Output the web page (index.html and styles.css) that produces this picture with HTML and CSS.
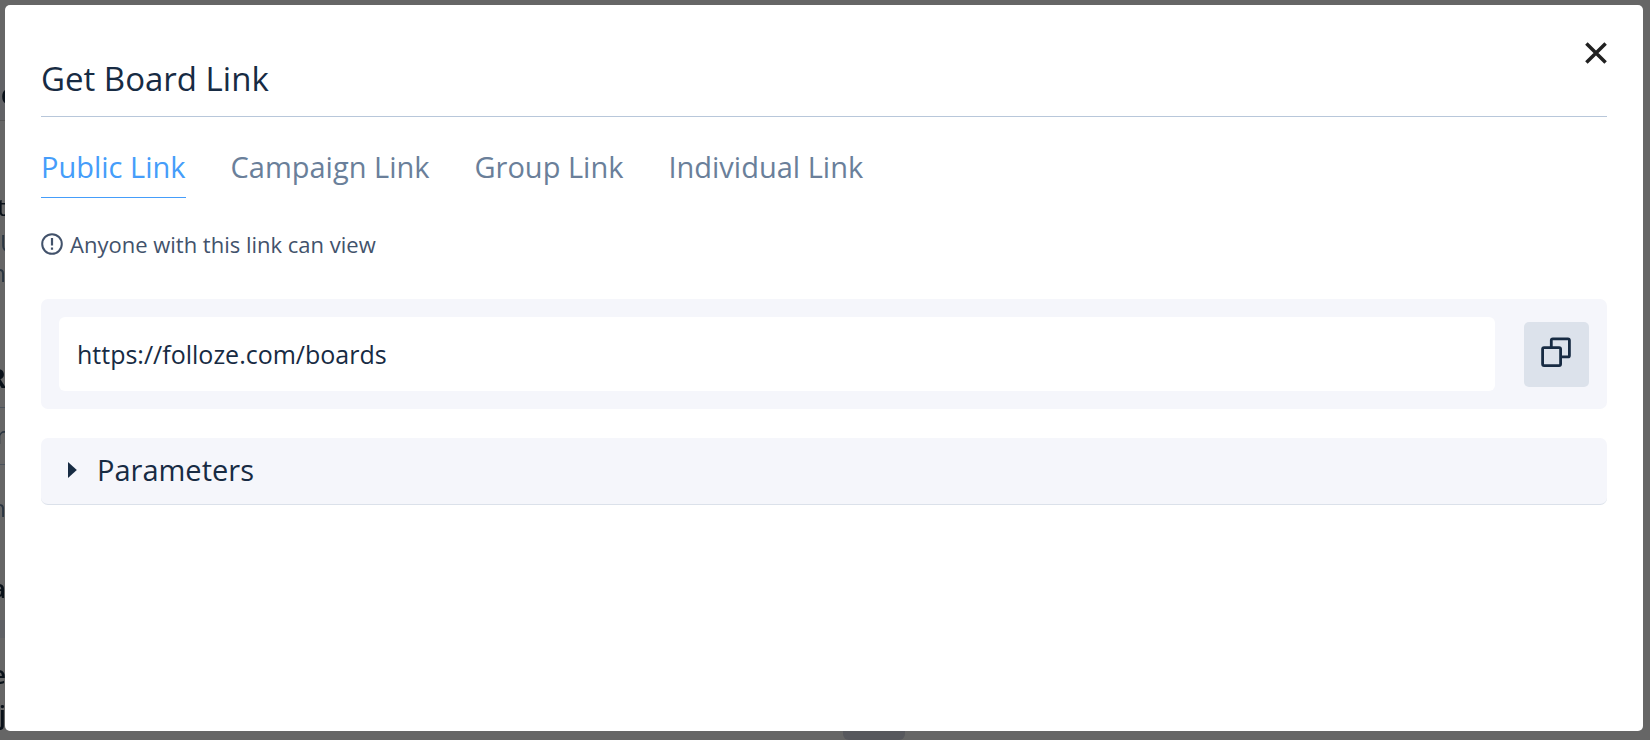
FILE: index.html
```html
<!DOCTYPE html>
<html lang="en">
<head>
<meta charset="utf-8">
<title>Get Board Link</title>
<link rel="stylesheet" href="styles.css">
</head>
<body>
<div class="page" aria-hidden="true">
  <div class="page-row page-head start">c</div>
  <div class="page-row item">it</div>
  <div class="page-row light start">U</div>
  <div class="page-row light">n</div>
  <div class="page-row section">R</div>
  <div class="page-row light ruled">r</div>
  <div class="page-row light group">h</div>
  <div class="page-row bold">a</div>
  <div class="page-row band"></div>
  <div class="page-row bold">e</div>
  <div class="page-row bold last">j</div>
  <div class="page-foot"></div>
</div>
<div class="overlay">
  <main class="modal" role="dialog" aria-labelledby="title">
    <button class="close" type="button" aria-label="Close">
      <svg width="22" height="22" viewBox="0 0 22 22" fill="none" stroke="#212121" stroke-width="3.5"><path d="M1.4 1.4 20.6 20.6M20.6 1.4 1.4 20.6"/></svg>
    </button>
    <h1 class="title" id="title">Get Board Link</h1>
    <nav class="tabs">
      <a class="tab active" href="#public">Public Link</a>
      <a class="tab" href="#campaign">Campaign Link</a>
      <a class="tab" href="#group">Group Link</a>
      <a class="tab" href="#individual">Individual Link</a>
    </nav>
    <p class="note">
      <svg width="22" height="22" viewBox="0 0 22 22" fill="none" stroke="#42526b" stroke-width="2"><circle cx="11" cy="11" r="9.8"/><path d="M11 5v7.5M11 14.5v2.3" stroke-width="2.2"/></svg>
      <span>Anyone with this link can view</span>
    </p>
    <div class="link-box">
      <input class="url" type="text" aria-label="Board link" value="https://folloze.com/boards" readonly>
      <button class="copy" type="button" aria-label="Copy link">
        <svg width="30" height="30" viewBox="0 0 30 30" fill="none" stroke="#172b43" stroke-width="2.8" stroke-linejoin="round"><path d="M10.3 10V3.3a1.5 1.5 0 0 1 1.5-1.5h15.1a1.5 1.5 0 0 1 1.5 1.5v15.1a1.5 1.5 0 0 1-1.5 1.5H20"/><rect x="1.6" y="10.6" width="18" height="18" rx="1.5"/></svg>
      </button>
    </div>
    <button class="params" type="button" aria-expanded="false">
      <svg width="9" height="16" viewBox="0 0 9 16" fill="#172b43"><path d="M0 0 8.8 8 0 16z"/></svg>
      <span>Parameters</span>
    </button>
  </main>
</div>
</body>
</html>
```
FILE: styles.css
```css
* { box-sizing: border-box; }
body {
  margin: 0;
  background: #666;
  color: #172b43;
  font-family: "Open Sans", "Noto Sans", sans-serif;
}
button, input { font: inherit; color: inherit; border: 0; }
button { cursor: pointer; }
svg { display: block; flex: none; }

.page {
  position: fixed;
  inset: 0;
  overflow: hidden;
  color: #091119;
  font-size: 26px;
  line-height: 28px;
}
.page-row { display: flex; justify-content: flex-end; width: 6px; height: 28px; }
.page-row.start { justify-content: flex-start; }
.page-head {
  width: 50%;
  height: 51px;
  margin-top: 70px;
  padding: 10px 0 0 1px;
  background: #626366;
  border-bottom: 1px solid #555;
  font-weight: 700;
}
.item { margin-top: 72px; }
.item, .light { font-size: 24px; font-weight: 500; }
.light { color: #2a3541; }
.light.start { margin-top: 8px; }
.light.start + .light { margin-top: 2px; }
.section { height: 36px; margin-top: 77px; font-weight: 700; }
.ruled {
  height: 58px;
  margin-top: 7px;
  padding-top: 13px;
  border-top: 1px solid #4b535c;
  border-bottom: 1px solid #4b535c;
}
.group { margin-top: 29px; }
.bold { font-weight: 600; margin-top: 52px; }
.band { height: 18px; margin-top: 18px; background: #5f6165; }
.band + .bold { margin-top: 22px; }
.last { margin-top: 12px; }
.page-foot {
  position: absolute;
  bottom: 0;
  left: 51.1%;
  width: 62px;
  height: 12px;
  background: #57585d;
  border-radius: 0 0 6px 6px;
}

.overlay { position: relative; min-height: 100vh; padding: 5px 7px 9px 5px; display: flex; }
.modal {
  position: relative;
  flex: 1;
  padding: 49px 36px;
  background: #fff;
  border-radius: 5px;
}
.close {
  position: absolute;
  top: 37px;
  right: 36px;
  padding: 0;
  background: none;
}
.title {
  margin: 0;
  padding-bottom: 12px;
  border-bottom: 1px solid #b8c7da;
  font-size: 33px;
  line-height: 50px;
  font-weight: 500;
}
.tabs { display: flex; gap: 45px; margin-top: 29px; }
.tab {
  padding-bottom: 9px;
  border-bottom: 1px solid transparent;
  color: #6a7f9a;
  font-size: 29px;
  line-height: 42px;
  font-weight: 500;
  text-decoration: none;
}
.tab.active { color: #459dfa; border-color: #459dfa; }
.note {
  display: flex;
  align-items: center;
  gap: 7px;
  margin: 30px 0 0;
  color: #42526b;
  font-size: 22px;
  line-height: 32px;
}
.link-box {
  display: flex;
  align-items: center;
  gap: 29px;
  margin-top: 39px;
  padding: 18px;
  background: #f5f6fb;
  border-radius: 7px;
}
.url {
  flex: 1;
  min-width: 0;
  height: 74px;
  padding: 0 18px;
  background: #fff;
  border-radius: 6px;
  font-size: 25px;
}
.copy {
  display: grid;
  place-items: center;
  width: 65px;
  height: 65px;
  padding: 0 2px 4px 0;
  background: #dce2eb;
  border-radius: 5px;
}
.params {
  display: flex;
  align-items: center;
  gap: 20px;
  width: 100%;
  margin-top: 29px;
  padding: 11px 27px 13px;
  background: #f5f6fb;
  border-bottom: 1px solid #dbe1ea;
  border-radius: 7px;
  font-size: 29px;
  line-height: 42px;
  font-weight: 500;
}
```
